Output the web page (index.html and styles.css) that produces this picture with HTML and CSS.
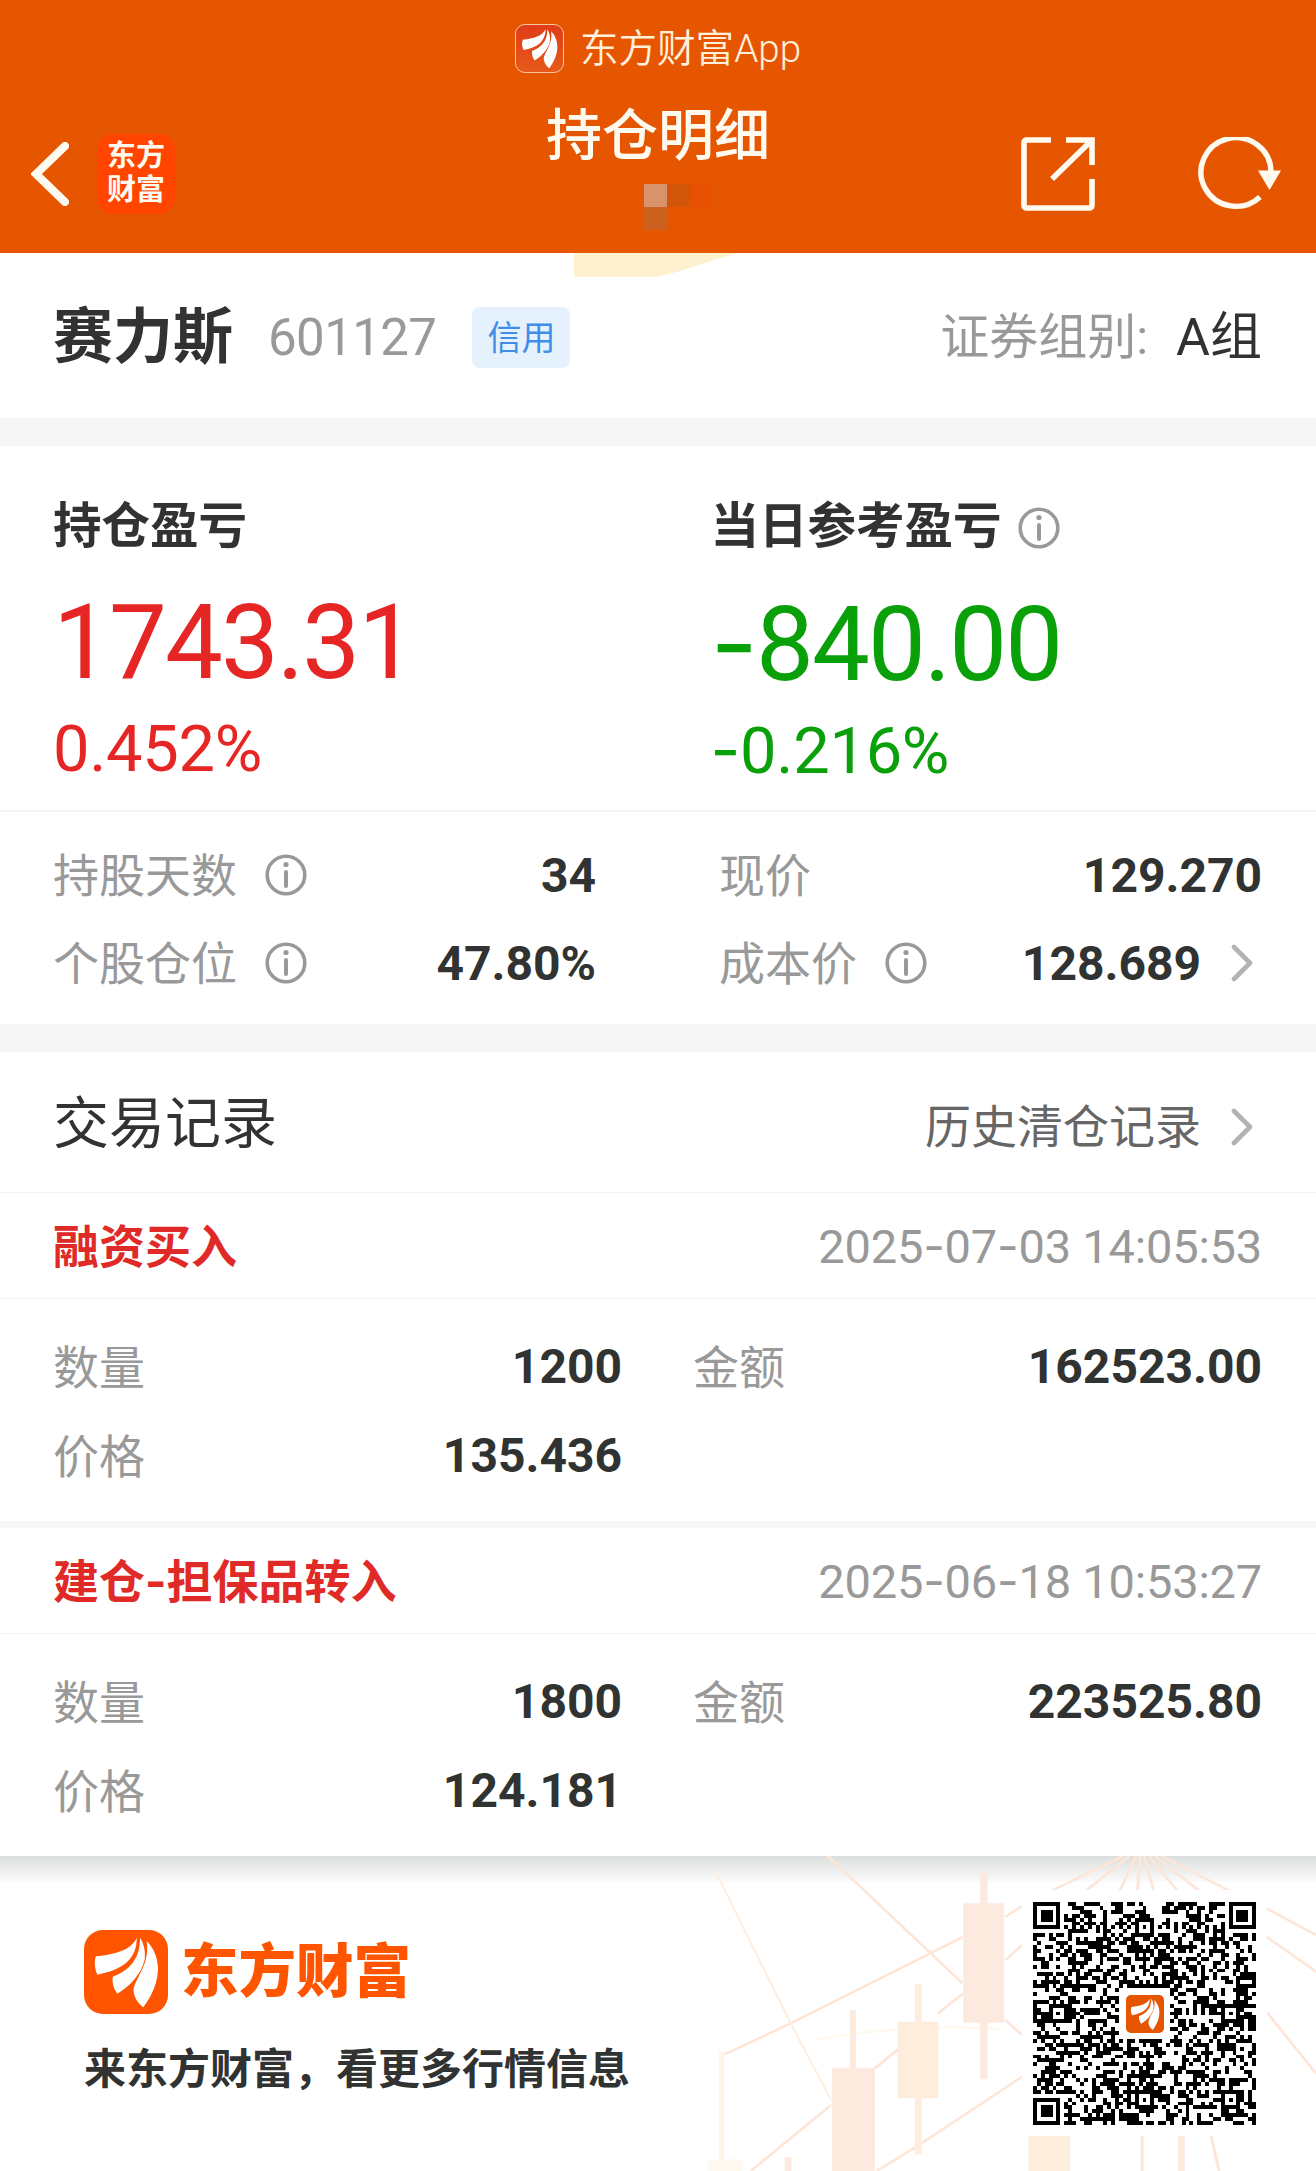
FILE: index.html
```html
<!DOCTYPE html>
<html lang="zh-CN">
<head>
    <meta charset="UTF-8">
    <meta name="viewport" content="width=device-width, initial-scale=1.0">
    <title>持仓明细</title>
    <link rel="stylesheet" href="styles.css">
</head>
<body>
    <!-- shared icons -->
    <svg class="defs" width="0" height="0">
        <symbol id="swoosh" viewBox="12 15 252 252">
            <path d="M170 38 C154 74 108 88 48 94 C41 112 45 132 52 149 C92 141 126 130 149 103 C164 84 171 62 170 38 Z"/>
            <path d="M180 38 C181 98 150 136 98 155 C96 176 102 192 112 206 C148 184 184 148 194 104 C197 80 192 56 180 38 Z"/>
            <path d="M200 48 C212 122 158 166 161 200 C164 220 174 234 190 247 C218 210 234 168 234 130 C233 96 220 68 200 48 Z"/>
        </symbol>
        <symbol id="info" viewBox="0 0 42 42">
            <circle cx="21" cy="21" r="18.8" fill="none" stroke="#999" stroke-width="3.6"/>
            <circle cx="21" cy="10.5" r="2.6" fill="#999"/>
            <path d="M21 18V32" stroke="#999" stroke-width="4" stroke-linecap="round"/>
        </symbol>
        <symbol id="arrow" viewBox="0 0 22 38">
            <path d="M3 3L19 19L3 35" fill="none" stroke="#b3b3b3" stroke-width="4.6" stroke-linecap="round" stroke-linejoin="round"/>
        </symbol>
    </svg>

    <header class="header">
        <div class="header-left">
            <svg class="back" viewBox="0 0 38 64"><path d="M34 4L5 32L34 60" fill="none" stroke="#fffaf0" stroke-width="8" stroke-linecap="round" stroke-linejoin="miter"/></svg>
            <div class="brand"><span>东方</span><span>财富</span></div>
        </div>
        <div class="header-center">
            <div class="app-row">
                <span class="app-icon"><svg><use href="#swoosh"/></svg></span>
                <span class="app-name">东方财富App</span>
            </div>
            <h1 class="title">持仓明细</h1>
            <div class="mosaic"><i class="m1"></i><i class="m2"></i><i class="m3"></i><i class="m4"></i></div>
        </div>
        <div class="header-right">
            <svg class="share" viewBox="0 0 74 74" fill="none" stroke="#fffaf0" stroke-width="5.6">
                <path d="M30 3H6Q3 3 3 6V68Q3 71 6 71H68Q71 71 71 68V42"/>
                <path d="M45 3H71V28M69 5L31 42"/>
            </svg>
            <svg class="refresh" viewBox="0 0 84 74">
                <path d="M73 35A35 34.3 0 1 0 62 60" fill="none" stroke="#fffaf0" stroke-width="5.4"/>
                <path d="M60 33.500H83L71.500 53Z" fill="#fffaf0"/>
            </svg>
        </div>
    </header>

    <section class="stock">
        <svg class="tint" viewBox="0 0 164 24"><path d="M0 0H164C120 12 96 24 74 24H0Z" fill="#fef1cf"/></svg>
        <span class="stock-name">赛力斯</span>
        <span class="stock-code">601127</span>
        <span class="tag">信用</span>
        <span class="group-label">证券组别:</span>
        <span class="group-value">A组</span>
    </section>

    <section class="profit">
        <div class="profit-col red">
            <div class="profit-title">持仓盈亏</div>
            <div class="profit-num">1743.31</div>
            <div class="profit-pct">0.452%</div>
        </div>
        <div class="profit-col green">
            <div class="profit-title">当日参考盈亏<svg class="info"><use href="#info"/></svg></div>
            <div class="profit-num"><span class="dash">-</span>840.00</div>
            <div class="profit-pct"><span class="dash">-</span>0.216%</div>
        </div>
    </section>

    <section class="metrics">
        <div class="row">
            <span class="label">持股天数</span><svg class="info"><use href="#info"/></svg>
            <b class="value">34</b>
        </div>
        <div class="row">
            <span class="label">现价</span>
            <b class="value">129.270</b>
        </div>
        <div class="row">
            <span class="label">个股仓位</span><svg class="info"><use href="#info"/></svg>
            <b class="value">47.80%</b>
        </div>
        <div class="row">
            <span class="label">成本价</span><svg class="info"><use href="#info"/></svg>
            <b class="value">128.689</b><svg class="arrow"><use href="#arrow"/></svg>
        </div>
    </section>

    <section class="trades">
        <div class="trades-head">
            <h2>交易记录</h2>
            <a class="history">历史清仓记录<svg class="arrow"><use href="#arrow"/></svg></a>
        </div>

        <article class="record">
            <div class="record-head">
                <b>融资买入</b>
                <time>2025<span class="dash">-</span>07<span class="dash">-</span>03 14:05:53</time>
            </div>
            <div class="record-body">
                <div class="row"><span class="label">数量</span><b class="value">1200</b></div>
                <div class="row"><span class="label">金额</span><b class="value">162523.00</b></div>
                <div class="row"><span class="label">价格</span><b class="value">135.436</b></div>
            </div>
        </article>

        <article class="record">
            <div class="record-head">
                <b>建仓<span class="dash">-</span>担保品转入</b>
                <time>2025<span class="dash">-</span>06<span class="dash">-</span>18 10:53:27</time>
            </div>
            <div class="record-body">
                <div class="row"><span class="label">数量</span><b class="value">1800</b></div>
                <div class="row"><span class="label">金额</span><b class="value">223525.80</b></div>
                <div class="row"><span class="label">价格</span><b class="value">124.181</b></div>
            </div>
        </article>
    </section>

    <footer class="footer">
        <!-- faint candlestick artwork behind the code -->
        <svg class="chart" viewBox="0 48 1568 945" preserveAspectRatio="none">
            <g fill="none" stroke="#fde6d8" stroke-width="7">
                <path d="M408 48L728 430M830 540L870 585"/>
                <path d="M160 645L320 550L730 290M830 230L870 198"/>
                <path d="M140 90L320 550L416 780" stroke="#fdeee2" stroke-width="5"/>
                <path d="M520 685L575 628M670 520L730 460M830 360L870 315"/>
                <path d="M225 993L416 795M525 993L625 915L870 710"/>
                <path d="M156 635V993" stroke="#fef4ea" stroke-width="12"/>
                <path d="M380 600C500 570 700 550 820 570" stroke="#fff8ee"/>
                <path d="M1110 48L940 152M1125 48L1022 152M1140 48L1102 152M1150 48L1144 152M1160 48L1182 152M1172 48L1238 152M1185 48L1290 152M1200 48L1362 152"/>
                <path d="M1450 205L1568 285M1450 290L1568 395M1450 515L1568 700"/>
                <path d="M1155 885V993M1318 885L1338 993"/>
            </g>
            <g fill="#fdeade">
                <path d="M770 94H788V190H827V548H788V718H770V548H730V190H770Z"/>
                <path d="M461 510H475V683H520V993H418V683H461Z"/>
                <path d="M615 432H631V545H671V775H631V943H615V775H574V545H615Z" fill="#feecdc"/>
                <path d="M885 885H984V993H885Z" fill="#feeede"/>
                <path d="M1240 885H1256V993H1240ZM306 952H322V993H306Z"/>
                <path d="M125 958H205V993H125Z" fill="#fff8ee"/>
            </g>
        </svg>
        <div class="footer-brand">
            <div class="logo-row">
                <span class="logo"><svg><use href="#swoosh"/></svg></span>
                <span class="logo-text">东方财富</span>
            </div>
            <p class="slogan">来东方财富，看更多行情信息</p>
        </div>
        <div class="qr">
            <svg id="qr" viewBox="0 0 57 57" shape-rendering="crispEdges"></svg>
            <span class="qr-logo"><svg><use href="#swoosh"/></svg></span>
        </div>
    </footer>

    <script>
        const N = 57;
        let seed = 601127;
        function next() {
            seed = (seed * 1103515245 + 12345) % 2147483648;
            return seed / 2147483648;
        }

        const grid = [];
        for (let y = 0; y < N; y++) {
            grid.push([]);
            for (let x = 0; x < N; x++) {
                grid[y].push(next() < 0.5);
            }
        }

        // square ring with a solid middle, r = outer radius in modules
        function ring(cx, cy, r, gap) {
            for (let y = -r - 1; y <= r + 1; y++) {
                for (let x = -r - 1; x <= r + 1; x++) {
                    const d = Math.max(Math.abs(x), Math.abs(y));
                    if (grid[cy + y] === undefined || cx + x < 0 || cx + x >= N) continue;
                    if (d > r) {
                        if (gap) grid[cy + y][cx + x] = false;
                        continue;
                    }
                    grid[cy + y][cx + x] = d !== r - 1;
                }
            }
        }
        for (let i = 8; i < N - 8; i++) {
            grid[6][i] = i % 2 === 0;
            grid[i][6] = i % 2 === 0;
        }
        [[28, 6], [6, 28], [50, 28], [28, 50], [50, 50]].forEach(p => ring(p[0], p[1], 2, false));
        [[3, 3], [53, 3], [3, 53]].forEach(p => ring(p[0], p[1], 3, true));

        let d = '';
        for (let y = 0; y < N; y++) {
            for (let x = 0; x < N; x++) {
                const hole = x > 21 && x < 35 && y > 21 && y < 35;
                if (grid[y][x] && !hole) d += 'M' + x + ' ' + y + 'h1v1h-1z';
            }
        }
        const path = document.createElementNS('http://www.w3.org/2000/svg', 'path');
        path.setAttribute('d', d);
        document.getElementById('qr').appendChild(path);
    </script>
</body>
</html>
```

FILE: styles.css
```css
* {
    box-sizing: border-box;
}
body {
    margin: 0;
    width: 1316px;
    background-color: #fff;
    color: #303331;
    font-family: Roboto, "Noto Sans CJK SC", sans-serif;
    line-height: 1;
}
h1, h2, p {
    margin: 0;
    font-weight: 400;
}
svg {
    display: block;
    flex: none;
}
.defs {
    position: absolute;
}
.dash {
    font-family: Inter, sans-serif;
}

/* header */
.header {
    display: grid;
    grid-template-columns: 1fr 400px 1fr;
    height: 253px;
    background-color: #e65600;
    color: #fffaf0;
}
.header-left {
    display: flex;
    align-items: center;
    gap: 28px;
    padding: 94px 0 0 31px;
}
.back {
    width: 38px;
    height: 64px;
}
.brand {
    display: flex;
    flex-direction: column;
    justify-content: center;
    gap: 5px;
    width: 78px;
    height: 80px;
    border-radius: 16px;
    background-color: #ff4500;
    text-align: center;
    font-size: 29px;
    font-weight: 700;
}
.header-center {
    display: flex;
    flex-direction: column;
    align-items: center;
    padding-top: 23px;
}
.app-row {
    display: flex;
    align-items: center;
    gap: 16px;
    height: 50px;
}
.app-icon {
    width: 49px;
    height: 49px;
    border: 1.5px solid #f8c9a0;
    border-radius: 10px;
    background: linear-gradient(#e03c18, #e65a1a);
    fill: #fff;
}
.app-icon svg {
    width: 100%;
    height: 100%;
}
.app-name {
    padding-top: 2px;
    font-size: 38.6px;
    font-weight: 350;
    color: #fff0dc;
}
.title {
    height: 111px;
    line-height: 126px;
    font-size: 56px;
    font-weight: 500;
}
.mosaic {
    display: grid;
    grid-template-columns: repeat(3, 23px);
    grid-template-rows: 23px 23px;
    width: 69px;
    margin-left: 41px;
}
.m1 { background-color: #d8936c; }
.m2 { background-color: #d25608; }
.m3 { background-color: #e65000; }
.m4 { background-color: #cb611d; }
.header-right {
    display: flex;
    justify-content: flex-end;
    gap: 103px;
    padding: 137px 34px 0 0;
}
.share {
    width: 74px;
    height: 74px;
}
.refresh {
    width: 84px;
    height: 74px;
}

/* stock line */
.stock {
    position: relative;
    display: flex;
    align-items: center;
    height: 193px;
    padding: 4px 54px 0 53px;
    border-bottom: 28px solid #f6f6f6;
}
.tint {
    position: absolute;
    top: 0;
    left: 574px;
    width: 164px;
    height: 24px;
}
.stock-name {
    font-size: 60px;
    font-weight: 700;
}
.stock-code {
    margin-left: 35px;
    font-size: 51px;
    letter-spacing: -0.6px;
    color: #999;
}
.tag {
    width: 98px;
    height: 61px;
    margin-left: 36px;
    border-radius: 8px;
    background-color: #e5f1fc;
    color: #3f8fe8;
    font-size: 34px;
    line-height: 63px;
    text-align: center;
}
.group-label {
    margin-left: auto;
    font-size: 49px;
    color: #999;
}
.group-value {
    margin-left: 28px;
    font-size: 52px;
}

/* profit and loss */
.profit {
    display: grid;
    grid-template-columns: 1fr 1fr;
    height: 366px;
    padding: 36px 0 0 53px;
    border-bottom: 2px solid #f5f5f5;
}
.profit-col + .profit-col {
    padding-left: 26px;
}
.profit-title {
    display: flex;
    align-items: center;
    gap: 16px;
    height: 89px;
    padding-top: 2px;
    font-size: 48.5px;
    font-weight: 700;
}
.info {
    width: 42px;
    height: 42px;
}
.profit-num {
    height: 144px;
    line-height: 144px;
    font-size: 103px;
    letter-spacing: -1.9px;
}
.profit-pct {
    height: 68px;
    line-height: 69px;
    font-size: 65px;
    letter-spacing: -0.3px;
}
.red .profit-num,
.red .profit-pct {
    color: #e62624;
}
.green .profit-num,
.green .profit-pct {
    color: #09a009;
}

/* label / value rows */
.row {
    display: flex;
    align-items: center;
}
.label {
    margin-left: -1px;
    padding-top: 2px;
    font-size: 46px;
    color: #999;
}
.row .info {
    margin-left: 28px;
}
.value {
    margin-left: auto;
    padding-top: 1px;
    font-size: 48px;
}
.arrow {
    width: 22px;
    height: 38px;
    margin: 0 9px 0 30px;
}
.metrics {
    display: grid;
    grid-template-columns: 542px 542px;
    grid-auto-rows: 88px;
    column-gap: 124px;
    height: 240px;
    padding: 19px 54px 0;
    border-bottom: 28px solid #f6f6f6;
}

/* trade records */
.trades-head {
    display: flex;
    align-items: center;
    justify-content: space-between;
    height: 141px;
    padding-left: 53px;
    padding-right: 54px;
    border-bottom: 1px solid #f3f3f3;
}
.trades-head h2 {
    padding-top: 4px;
    font-size: 56px;
}
.history {
    display: flex;
    align-items: center;
    padding-top: 9px;
    font-size: 46px;
    color: #666;
}
.record-head {
    display: flex;
    align-items: center;
    justify-content: space-between;
    height: 106px;
    padding: 0 54px 0 53px;
    border-bottom: 1px solid #f3f3f3;
}
.record-head b {
    padding-top: 2px;
    font-size: 46px;
    color: #e02a28;
}
.record-head time {
    font-size: 47px;
    letter-spacing: -0.2px;
    color: #999;
}
.record-body {
    display: grid;
    grid-template-columns: 568px 568px;
    grid-auto-rows: 89px;
    column-gap: 72px;
    height: 222px;
    padding: 23px 54px 0;
}
.record + .record {
    border-top: 7px solid #f6f6f6;
}

/* footer */
.footer {
    position: relative;
    display: flex;
    justify-content: space-between;
    height: 315px;
    padding: 34px 49px 0 84px;
}
.footer::before {
    content: "";
    position: absolute;
    inset: 0 0 auto;
    height: 26px;
    background: linear-gradient(rgba(120, 130, 125, 0.26), rgba(120, 120, 120, 0.03));
}
.chart {
    position: absolute;
    top: 0;
    right: 0;
    width: 660px;
    height: 315px;
}
.footer-brand {
    padding-top: 40px;
}
.logo-row {
    display: flex;
    align-items: center;
    gap: 13px;
}
.logo {
    width: 84px;
    height: 84px;
    border-radius: 19px;
    background-color: #ff5500;
    fill: #fff;
}
.logo svg {
    width: 84px;
    height: 84px;
}
.logo-text {
    padding-top: 2px;
    font-size: 57.5px;
    font-weight: 900;
    color: #ff5500;
}
.slogan {
    margin-top: 35px;
    font-size: 42px;
    font-weight: 700;
}
.qr {
    position: relative;
    width: 245px;
    height: 246px;
    padding: 12px 11px;
    border-radius: 8px;
    background-color: #fff;
}
#qr {
    width: 223px;
    height: 223px;
}
.qr-logo {
    position: absolute;
    top: 105px;
    left: 104px;
    width: 38px;
    height: 38px;
    border-radius: 5px;
    background-color: #e65600;
    fill: #fff;
}
.qr-logo svg {
    width: 38px;
    height: 38px;
}
```
